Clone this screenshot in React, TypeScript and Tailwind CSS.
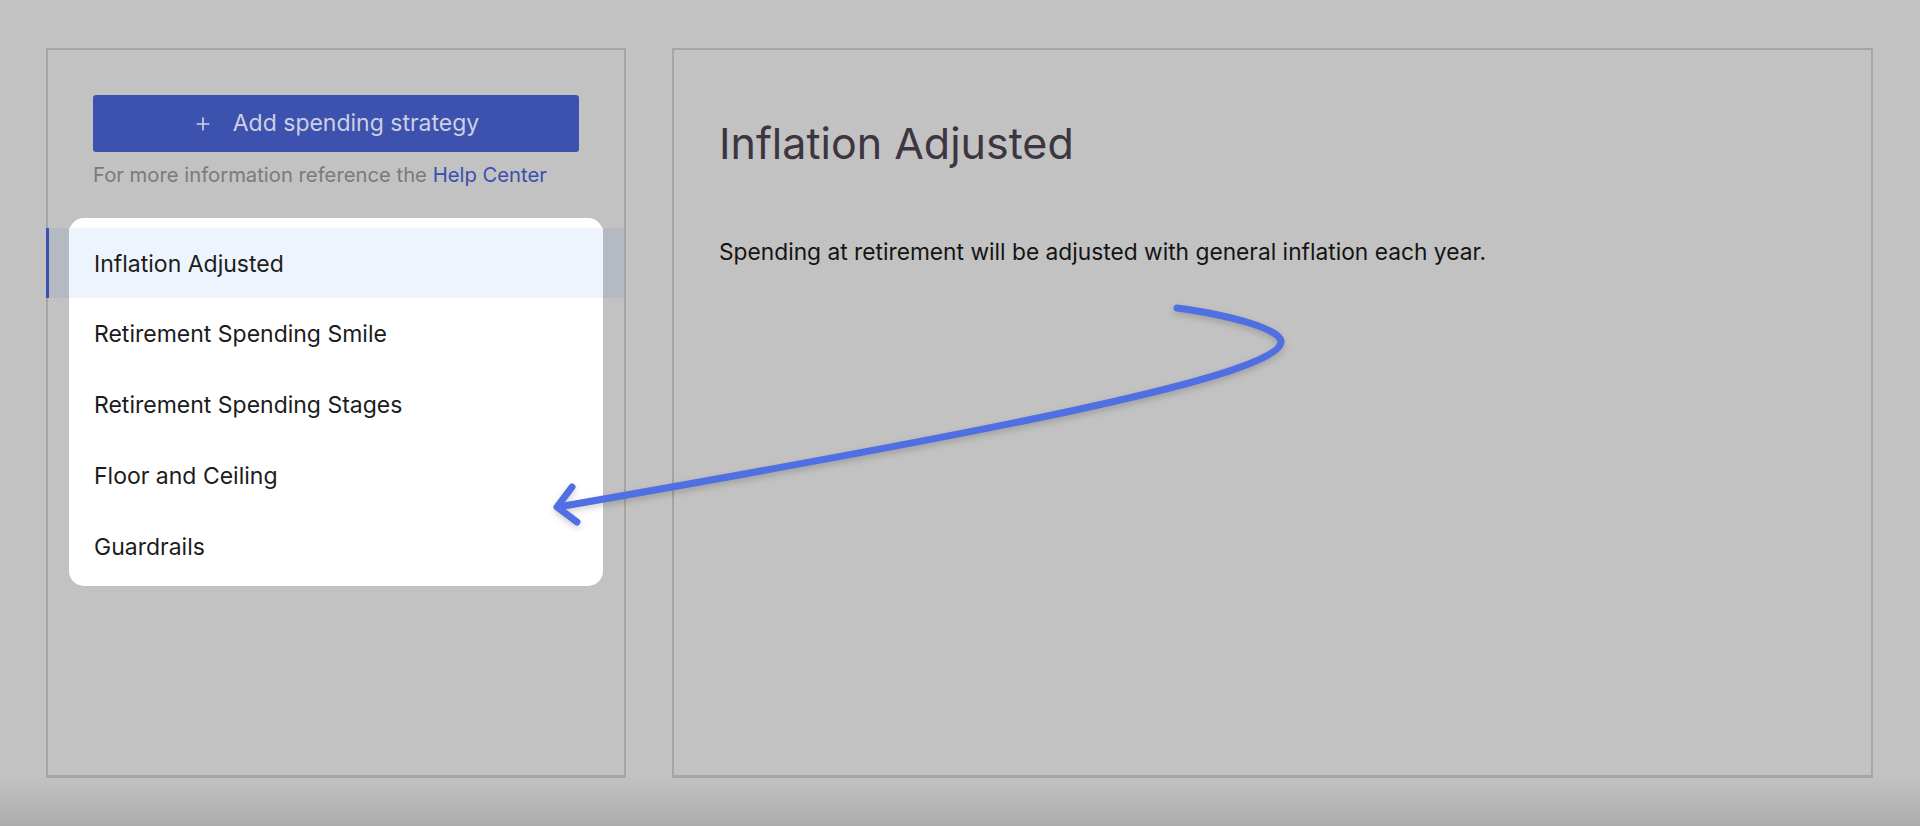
import { Plus } from 'lucide-react';

const strategies = [
  'Inflation Adjusted',
  'Retirement Spending Smile',
  'Retirement Spending Stages',
  'Floor and Ceiling',
  'Guardrails',
];

export default function App() {
  const selected = 0;

  return (
    <div className="relative h-[826px] w-full overflow-hidden bg-[linear-gradient(to_bottom,#c2c2c2_94%,#acacac)] font-['Inter',sans-serif]">
      <div className="flex h-[778px] gap-[46px] pl-[46px] pr-[47px] pt-[48px]">
        {/* Strategy list */}
        <aside className="flex w-[580px] shrink-0 flex-col border-2 border-b-[3px] border-[#a8a5a0]">
          <div className="px-[45px] pt-[45px]">
            <button className="flex h-[57px] w-full items-center justify-center gap-[20px] rounded-[3px] bg-[#3c52ae] text-[23px] text-[#ccd0e2]">
              <Plus className="h-[20px] w-[20px]" strokeWidth={2} />
              Add spending strategy
            </button>
            <p className="mt-[10px] text-[20.25px] leading-[26px] text-[#7a7a7a]">
              For more information reference the{' '}
              <span className="text-[#3a4fb0]">Help Center</span>
            </p>
          </div>

          <div className="mx-[21px] mt-[30px] rounded-[15px] bg-white pb-[4px] pt-[10px]">
            {strategies.map((name, i) =>
              i === selected ? (
                <div
                  key={name}
                  className="-ml-[23px] -mr-[21px] border-l-[3px] border-[#3a4fb0] bg-[#b4b9c2]"
                >
                  <div className="ml-[20px] mr-[21px] flex h-[70px] items-center bg-[#eef4fe] px-[25px] pt-[2px] text-[23px] text-[#1c1c1c]">
                    {name}
                  </div>
                </div>
              ) : (
                <div
                  key={name}
                  className="flex h-[71px] items-center px-[25px] pt-[2px] text-[23px] text-[#1c1c1c]"
                >
                  {name}
                </div>
              )
            )}
          </div>
        </aside>

        {/* Strategy detail */}
        <section className="flex-1 border-2 border-b-[3px] border-[#a8a5a0] pl-[45px] pt-[67px]">
          <h1 className="text-[43px] leading-[52px] text-[#3d3540]">Inflation Adjusted</h1>
          <p className="mt-[68px] text-[22.75px] leading-[30px] text-[#141414]">
            Spending at retirement will be adjusted with general inflation each year.
          </p>
        </section>
      </div>

      {/* annotation arrow */}
      <svg
        className="pointer-events-none absolute left-0 top-0 h-[826px] w-[1920px] drop-shadow-[0_3px_3px_rgba(0,0,0,0.18)]"
        viewBox="0 0 1920 826"
        fill="none"
        stroke="#4f6fe2"
        strokeWidth={7}
        strokeLinecap="round"
        strokeLinejoin="round"
      >
        <path d="M1177 308 C1235 316 1282 330 1281 342 C1280 375 1000 430 558 507" />
        <path d="M572 487 L557 507 L577 522" />
      </svg>
    </div>
  );
}
